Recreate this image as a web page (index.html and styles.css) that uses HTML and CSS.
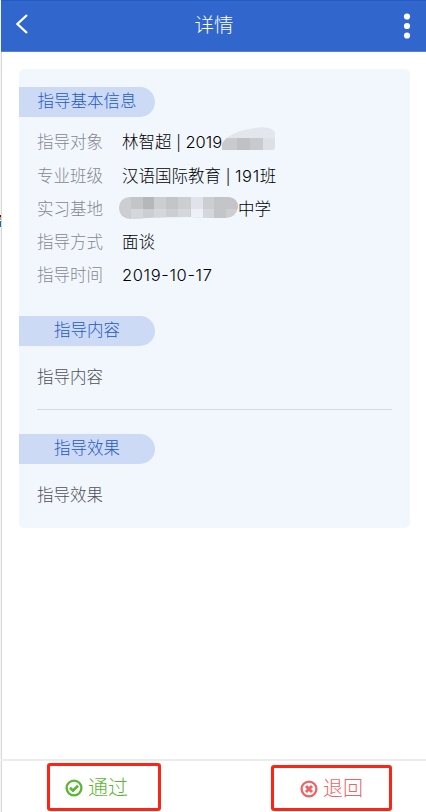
FILE: index.html
```html
<!DOCTYPE html>
<html lang="zh-CN">
<head>
<meta charset="utf-8">
<title>详情</title>
<link rel="stylesheet" href="styles.css">
</head>
<body>
<div class="edge"><i class="edge-mark"></i></div>
<div class="app">
  <header class="bar">
    <svg class="back" width="14" height="22" viewBox="0 0 14 22"><path d="M12 2 2.4 11 12 20" fill="none" stroke="#fff" stroke-width="2.3"/></svg>
    <h1 class="title">详情</h1>
    <svg class="more" width="8" height="28" viewBox="0 0 8 28" fill="#fff"><circle cx="4" cy="4.5" r="3.1"/><circle cx="4" cy="14" r="3.1"/><circle cx="4" cy="23.5" r="3.1"/></svg>
  </header>
  <main class="main">
    <section class="card">
      <h2 class="tag">指导基本信息</h2>
      <dl class="info">
        <div class="row"><dt>指导对象</dt><dd>林智超 <span class="sep">|</span> 2019<svg class="mask mask-id" width="54" height="24" viewBox="0 0 54 24">
          <clipPath id="a"><path d="M0 23V17Q4 8 22 3Q38-1 47 1Q53 3 53 7V20Q53 23 50 23Z"/></clipPath>
          <g clip-path="url(#a)"><path fill="#e3e7ed" d="M0 0h54v24H0z"/><path fill="#c8cacd" d="M0 11h41v13H0z"/><path fill="#bfc1c4" d="M15 11h13v13H15z"/><path fill="#dde0e5" d="M41 11h13v13H41z"/></g></svg></dd></div>
        <div class="row"><dt>专业班级</dt><dd>汉语国际教育 <span class="sep">|</span> <span class="num">191</span>班</dd></div>
        <div class="row"><dt>实习基地</dt><dd class="school"><svg class="mask-base" width="119" height="22" viewBox="0 0 119 22">
          <clipPath id="b"><path d="M10 0H109Q119 1 119 10Q118 20 107 21Q88 21 70 20Q45 20 28 21L13 22Q0 22 0 10Q1 1 10 0Z"/></clipPath>
          <g clip-path="url(#b)"><path fill="#ccced1" d="M0 0h119v22H0z"/><path fill="#c3c5c8" d="M12 0h12v12H12zM47 0h12v12H47zM95 0h24v12H95zM95 12h12v10H95z"/><path fill="#b6b7bb" d="M24 0h11v12H24z"/><path fill="#d4d7db" d="M12 12h12v10H12zM35 12h12v10H35zM59 12h12v10H59zM83 12h12v10H83z"/><path fill="#e0e4ea" d="M72 0h12v12H72z"/><path fill="#edf1f7" d="M72 12h12v10H72z"/></g></svg>中学</dd></div>
        <div class="row"><dt>指导方式</dt><dd>面谈</dd></div>
        <div class="row"><dt>指导时间</dt><dd class="num">2019-10-17</dd></div>
      </dl>
      <h2 class="tag tag-content">指导内容</h2>
      <p class="text">指导内容</p>
      <hr class="line">
      <h2 class="tag">指导效果</h2>
      <p class="text">指导效果</p>
    </section>
  </main>
  <footer class="actions">
    <button class="action pass"><svg width="18" height="18" viewBox="0 0 18 18" fill="none" stroke="currentColor"><circle cx="9" cy="9" r="7.4" stroke-width="2.3"/><path d="m5 8.8 3 2.9 5-5" stroke-width="2.7"/></svg>通过</button>
    <button class="action reject"><svg width="18" height="18" viewBox="0 0 18 18" fill="none" stroke="currentColor"><circle cx="9" cy="9" r="7.4" stroke-width="2.3"/><path d="m6 6 6 6m0-6-6 6" stroke-width="3.1"/></svg>退回</button>
  </footer>
</div>
</body>
</html>
```
FILE: styles.css
```css
* { box-sizing: border-box; }
body {
  margin: 0;
  height: 812px;
  display: flex;
  overflow: hidden;
  background: #fff;
  font: 300 16.5px/33px Inter, "Noto Sans CJK SC", sans-serif;
}
h1, h2, p, dl, dd { margin: 0; font-weight: 300; }
.edge { width: 2px; background: linear-gradient(90deg, #f4f4f4 1px, #d8d8da 1px); padding-top: 215px; flex: none; }
.edge-mark { display: block; width: 1px; height: 12px; background: linear-gradient(#28244c 0 2px, #e99048 2px 5px, #fff 5px 6px, #176bc0 6px); }
.app { flex: 1; display: flex; flex-direction: column; margin-left: -1px; }
.bar {
  height: 52px;
  flex: none;
  display: flex;
  align-items: center;
  justify-content: space-between;
  padding: 0 15px 4px 14px;
  background: #3166cc;
  border-top: 1px solid #235bc4;
  border-bottom: 1px solid #5580d0;
}
.back { margin-bottom: 1px; }
.more { margin-top: 3px; }
.title { padding-top: 2px; font-size: 19.5px; margin-left: -4px; color: #fff; }
.main { flex: 1; padding: 17px 16px 0 18px; }
.card { height: 459px; padding-top: 18px; border-radius: 5px; background: #f2f7fe; }
.tag {
  width: 136px;
  height: 30px;
  border-radius: 0 15px 15px 0;
  background: #ccdaf5;
  color: #2459c2;
  font-size: 16.5px;
  line-height: 28px;
  text-align: center;
}
.info { padding: 9.4px 18px 0; }
.row { display: flex; height: 33.2px; }
.row dt { width: 85px; color: #858891; }
.row dd { position: relative; color: #000; white-space: nowrap; }
.sep { display: inline-block; font-size: 15px; line-height: 20px; }
.row .num { letter-spacing: 0.65px; }
.mask-id { position: absolute; left: 100px; top: 0.6px; }
.school { display: flex; margin-left: -3px; }
.mask-base { margin-top: 4.6px; }
.tag-content { margin-top: 23.6px; }
.text { height: 33px; margin: 15px 18px 0; color: #4e5157; }
.line { height: 1px; margin: 15px 18px 24px; border: 0; background: #d3d8e3; }
.actions {
  height: 53px;
  flex: none;
  display: flex;
  justify-content: space-between;
  align-items: flex-end;
  padding: 0 34px 1px 46px;
  border-top: 2px solid #ececec;
}
.action {
  display: flex;
  align-items: center;
  justify-content: center;
  gap: 5px;
  padding: 0;
  border: 3px solid #ff2314;
  border-radius: 3px;
  background: none;
  font: inherit;
  font-size: 20px;
  line-height: 30px;
}
.pass { width: 114px; height: 48px; padding-right: 15px; padding-top: 2px; color: #5ab731; }
.reject { width: 121px; height: 46px; padding-top: 1px; color: #ed6466; }
```
